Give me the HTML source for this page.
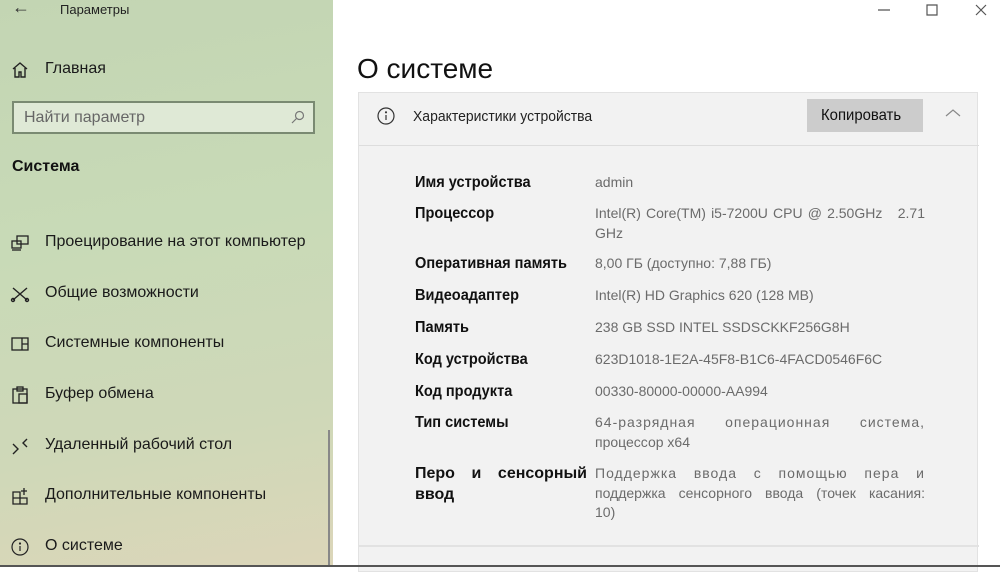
<!DOCTYPE html>
<html><head><meta charset="utf-8"><style>
*{margin:0;padding:0;box-sizing:border-box}
body{width:1000px;height:567px;overflow:hidden;position:relative;background:#fff;font-family:"Liberation Sans","DejaVu Sans",sans-serif;color:#000}
#side{position:absolute;left:0;top:0;width:333px;height:567px;background:linear-gradient(170deg,#c3d5b3 0%,#c8dab7 40%,#cfd8b8 75%,#dcd6b9 100%)}
.t{position:absolute;white-space:nowrap}
.it{position:absolute;left:45px;font-size:16px;color:#1a1a1a}
.ic{position:absolute;left:10px;width:20px;height:20px}
#panel{position:absolute;left:358px;top:92px;width:620px;height:480px;background:#f2f2f2;border:1px solid #e2e2e2}
.lb{position:absolute;left:56px;font-size:16px;font-weight:bold;color:#111;transform:scaleX(.91);transform-origin:left}
.vl{position:absolute;left:236px;width:330px;font-size:14px;color:#6b6b6b;line-height:19.5px}
.j{display:block;text-align:justify;text-align-last:justify;white-space:nowrap}
.ls{letter-spacing:1px}
</style></head><body>
<div id="side">
<div class="t" style="left:12px;top:-3px;font-size:18px;color:#333">&#8592;</div>
<div class="t" style="left:60px;top:2px;font-size:13px;color:#222">Параметры</div>
<svg class="ic" style="top:60px" viewBox="0 0 20 20" fill="none" stroke="#222" stroke-width="1.4"><path d="M3 9L10 3l7 6M5 8v9h4v-5h2v5h4V8"/></svg>
<div class="it" style="top:60px">Главная</div>
<div style="position:absolute;left:12px;top:101px;width:303px;height:33px;border:2px solid #7a8a72;background:#dfe9d6"></div>
<div class="t" style="left:24px;top:109px;font-size:16px;color:#666">Найти параметр</div>
<svg style="position:absolute;left:291px;top:110px" width="14" height="14" fill="none" stroke="#777" stroke-width="1.2"><circle cx="8.5" cy="5.5" r="4"/><path d="M5.5 8.5L1 13"/></svg>
<div class="t" style="left:12px;top:158px;font-size:16px;font-weight:bold;color:#111">Система</div>
<svg class="ic" style="top:233px" viewBox="0 0 20 20" fill="none" stroke="#222" stroke-width="1.3"><rect x="7" y="3" width="11" height="8"/><rect x="2" y="8" width="9" height="7"/><path d="M2 17h9"/></svg>
<div class="it" style="top:233px">Проецирование на этот компьютер</div>
<svg class="ic" style="top:284px" viewBox="0 0 20 20" fill="none" stroke="#222" stroke-width="1.4"><path d="M3 4l14 12M17 4L3 16"/><circle cx="3" cy="16" r="1.5"/><circle cx="17" cy="16" r="1.5"/></svg>
<div class="it" style="top:284px">Общие возможности</div>
<svg class="ic" style="top:334px" viewBox="0 0 20 20" fill="none" stroke="#222" stroke-width="1.3"><rect x="2" y="4" width="16" height="12"/><path d="M12 4v12M12 10h6"/></svg>
<div class="it" style="top:334px">Системные компоненты</div>
<svg class="ic" style="top:385px" viewBox="0 0 20 20" fill="none" stroke="#222" stroke-width="1.3"><rect x="3" y="4" width="14" height="14"/><rect x="7" y="2" width="6" height="4"/><rect x="9" y="9" width="8" height="9"/></svg>
<div class="it" style="top:385px">Буфер обмена</div>
<svg class="ic" style="top:436px" viewBox="0 0 20 20" fill="none" stroke="#222" stroke-width="1.4"><path d="M3 8l5 5-5 5M17 3l-4 4 4 4"/></svg>
<div class="it" style="top:436px">Удаленный рабочий стол</div>
<svg class="ic" style="top:486px" viewBox="0 0 20 20" fill="none" stroke="#222" stroke-width="1.3"><path d="M3 6h7v12H3zM3 12h14v6h-7M10 6v12M14 2v7M11 5h6"/></svg>
<div class="it" style="top:486px">Дополнительные компоненты</div>
<svg class="ic" style="top:537px" viewBox="0 0 20 20" fill="none" stroke="#222" stroke-width="1.2"><circle cx="10" cy="10" r="8"/><path d="M10 9v5"/><circle cx="10" cy="6.5" r=".5"/></svg>
<div class="it" style="top:537px">О системе</div>
<div style="position:absolute;left:328px;top:430px;width:2px;height:137px;background:#888"></div>
</div>
<svg style="position:absolute;left:876px;top:3px" width="120" height="14" fill="none" stroke="#555" stroke-width="1.2"><path d="M2 7h12M51 2h10v10H51zM100 2l10 10M110 2l-10 10"/></svg>
<div class="t" style="left:357px;top:53px;font-size:28px;color:#111">О системе</div>
<div id="panel">
<svg style="position:absolute;left:18px;top:14px" width="18" height="18" fill="none" stroke="#333" stroke-width="1.2"><circle cx="9" cy="9" r="8"/><path d="M9 8v5"/><circle cx="9" cy="5.3" r=".5"/></svg>
<div class="t" style="left:54px;top:15px;font-size:15px;color:#222;transform:scaleX(.93);transform-origin:left">Характеристики устройства</div>
<div style="position:absolute;left:448px;top:6px;width:116px;height:33px;background:#cccccc"></div>
<div class="t" style="left:462px;top:14px;font-size:16px;color:#111;transform:scaleX(.93);transform-origin:left">Копировать</div>
<svg style="position:absolute;left:586px;top:15px" width="16" height="10" fill="none" stroke="#888" stroke-width="1.2"><path d="M1 8l7-6 7 6"/></svg>
<div style="position:absolute;left:0;top:52px;width:620px;height:1px;background:#ddd"></div>
<div class="lb" style="top:81px">Имя устройства</div><div class="vl" style="top:80px">admin</div>
<div class="lb" style="top:112px">Процессор</div><div class="vl" style="top:111px"><span class="j">Intel(R) Core(TM) i5-7200U CPU @ 2.50GHz &nbsp; 2.71</span>GHz</div>
<div class="lb" style="top:162px">Оперативная память</div><div class="vl" style="top:161px">8,00 ГБ (доступно: 7,88 ГБ)</div>
<div class="lb" style="top:194px">Видеоадаптер</div><div class="vl" style="top:193px">Intel(R) HD Graphics 620 (128 MB)</div>
<div class="lb" style="top:226px">Память</div><div class="vl" style="top:225px">238 GB SSD INTEL SSDSCKKF256G8H</div>
<div class="lb" style="top:258px">Код устройства</div><div class="vl" style="top:257px">623D1018-1E2A-45F8-B1C6-4FACD0546F6C</div>
<div class="lb" style="top:290px">Код продукта</div><div class="vl" style="top:289px">00330-80000-00000-AA994</div>
<div class="lb" style="top:321px">Тип системы</div><div class="vl" style="top:320px"><span class="j ls">64-разрядная операционная система,</span>процессор x64</div>
<div class="lb" style="top:370px;line-height:21px;transform:none;font-size:16px;width:172px"><span class="j">Перо и сенсорный</span>ввод</div><div class="vl" style="top:371px"><span class="j ls">Поддержка ввода с помощью пера и</span><span class="j">поддержка сенсорного ввода (точек касания:</span>10)</div>
<div style="position:absolute;left:0;top:452px;width:620px;height:2px;background:#e2e2e2"></div>
</div>
<div style="position:absolute;left:0;top:565px;width:1000px;height:2px;background:#555"></div>
</body></html>
